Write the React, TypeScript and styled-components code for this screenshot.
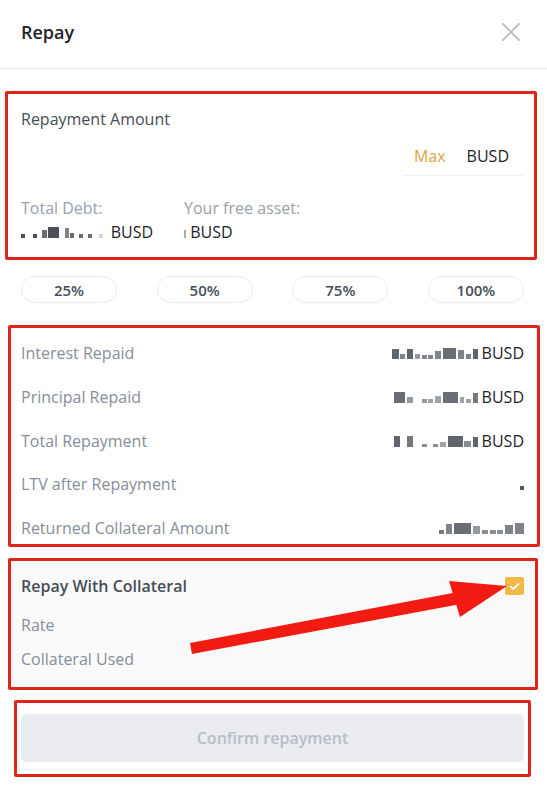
import React, { useState } from "react";
import styled, { createGlobalStyle } from "styled-components";

const GlobalStyle = createGlobalStyle`
  html, body {
    margin: 0;
    padding: 0;
    background: #ffffff;
  }
  body {
    font-family: "Open Sans", "Noto Sans", "Liberation Sans", sans-serif;
    color: #1e2329;
    -webkit-font-smoothing: antialiased;
  }
`;

const StyledModal = styled.div`
  position: relative;
  width: 547px;
  height: 786px;
  background: #ffffff;
  overflow: hidden;
`;

const StyledHeader = styled.div`
  height: 68px;
  padding: 0 24px 0 21px;
  display: flex;
  align-items: center;
  justify-content: space-between;
  border-bottom: 1px solid #eaecef;
`;

const StyledTitle = styled.div`
  font-size: 18px;
  font-weight: 600;
  color: #1e2329;
  margin-top: -4px;
`;

const StyledClose = styled.button`
  border: none;
  outline: none;
  background: transparent;
  padding: 0;
  width: 24px;
  height: 24px;
  display: flex;
  align-items: center;
  justify-content: center;
  margin-top: -4px;
  cursor: pointer;
`;

const StyledBody = styled.div`
  display: flex;
  flex-direction: column;
  padding-top: 22px;
`;

const StyledMark = styled.div<{ $left: number; $right: number; $bg?: string }>`
  margin: 0 ${(p) => p.$right}px 0 ${(p) => p.$left}px;
  border: 3px solid #e0241a;
  border-radius: 2px;
  background: ${(p) => p.$bg || "#ffffff"};
  padding: 0 ${(p) => 547 - 524 - p.$right - 3}px 0 ${(p) => 21 - p.$left - 3}px;
`;

const StyledGap = styled.div<{ $h: number }>`
  height: ${(p) => p.$h}px;
  flex-shrink: 0;
`;

const StyledLabel = styled.div`
  font-size: 16px;
  color: #474d57;
  line-height: 20px;
`;

const StyledAmountBlock = styled.div`
  display: flex;
  flex-direction: column;
  padding: 15px 0 15px;
`;

const StyledInputRow = styled.div`
  display: flex;
  justify-content: flex-end;
  margin-top: 8px;
`;

const StyledInputTail = styled.div`
  width: 121px;
  height: 39px;
  display: flex;
  align-items: center;
  justify-content: flex-end;
  gap: 21px;
  padding-right: 15px;
  box-sizing: border-box;
  border-bottom: 1px solid #eef0f2;
  font-size: 16px;
`;

const StyledMax = styled.span`
  color: #e2a243;
  font-weight: 500;
`;

const StyledUnit = styled.span`
  color: #1e2329;
`;

const StyledAssets = styled.div`
  display: grid;
  grid-template-columns: 163px auto;
  margin-top: 22px;
`;

const StyledAsset = styled.div`
  display: flex;
  flex-direction: column;
  gap: 4px;
  font-size: 16px;
  line-height: 20px;

  & > span:first-child {
    color: #9aa1ab;
  }
`;

const StyledAssetValue = styled.div`
  display: flex;
  align-items: center;
  gap: 8px;
  color: #1e2329;
`;

const StyledPercents = styled.div`
  display: grid;
  grid-template-columns: repeat(4, 96px);
  justify-content: space-between;
  padding: 16px 23px 22px 21px;
`;

const StyledPercent = styled.button`
  height: 27px;
  border: 1px solid #eaecef;
  border-radius: 14px;
  background: #ffffff;
  outline: none;
  font-family: inherit;
  font-size: 15px;
  font-weight: 600;
  color: #474d57;
  cursor: pointer;
  padding: 0;
`;

const StyledRows = styled.div`
  display: flex;
  flex-direction: column;
  gap: 23.75px;
  padding: 15px 0 6px;
`;

const StyledRow = styled.div`
  height: 20px;
  display: flex;
  align-items: center;
  justify-content: space-between;
  font-size: 16px;
`;

const StyledRowLabel = styled.span`
  color: #878e99;
`;

const StyledRowValue = styled.span`
  display: flex;
  align-items: center;
  gap: 4px;
  color: #1e2329;
`;

const StyledCollateral = styled.div`
  display: flex;
  flex-direction: column;
  padding: 14px 0 18px;
`;

const StyledCollateralHead = styled.div`
  display: flex;
  align-items: center;
  justify-content: space-between;
  height: 22px;
  font-size: 16px;
  font-weight: 600;
  color: #474d57;
`;

const StyledCheck = styled.button<{ $checked: boolean }>`
  width: 19px;
  height: 18px;
  border-radius: 2px;
  border: none;
  padding: 0;
  background: ${(p) => (p.$checked ? "#f3b945" : "#eaecef")};
  display: flex;
  align-items: center;
  justify-content: center;
  cursor: pointer;
`;

const StyledSubLabel = styled.div<{ $top: number }>`
  margin-top: ${(p) => p.$top}px;
  font-size: 16px;
  line-height: 20px;
  color: #878e99;
`;

const StyledConfirm = styled.button`
  width: 100%;
  height: 48px;
  margin: 11px 0 12px;
  border: none;
  outline: none;
  border-radius: 5px;
  background: #eaecef;
  color: #b7bdc6;
  font-family: inherit;
  font-size: 16px;
  font-weight: 600;
  cursor: not-allowed;
`;

const StyledBlocks = styled.span`
  display: inline-flex;
  align-items: flex-end;
  height: 12px;
`;

const StyledBlock = styled.i<{ $w: number; $h: number; $o: number }>`
  display: block;
  width: ${(p) => p.$w}px;
  height: ${(p) => p.$h}px;
  background: #2b3139;
  opacity: ${(p) => p.$o};
`;

const StyledArrow = styled.svg`
  position: absolute;
  left: 0;
  top: 0;
  pointer-events: none;
`;

// blurred, redacted amounts: [width, height, opacity]
type Blk = [number, number, number];

const Redacted: React.FC<{ blocks: Blk[]; k?: number }> = ({ blocks, k = 1 }) => (
  <StyledBlocks style={{ gap: k }}>
    {blocks.map(([w, h, o], i) => (
      <StyledBlock key={i} $w={w * k} $h={h} $o={o} />
    ))}
  </StyledBlocks>
);

const debt: Blk[] = [
  [3, 4, 0.85], [4, 0, 0], [3, 4, 0.85], [2, 0, 0], [4, 8, 0.7], [8, 11, 0.85],
  [3, 0, 0], [3, 10, 0.6], [3, 5, 0.7], [2, 0, 0], [3, 4, 0.7], [2, 0, 0],
  [3, 4, 0.7], [3, 0, 0], [3, 4, 0.2],
];
const interest: Blk[] = [
  [4, 10, 0.75], [3, 5, 0.6], [4, 10, 0.75], [3, 5, 0.5], [3, 4, 0.6],
  [3, 4, 0.6], [4, 8, 0.6], [8, 11, 0.7], [4, 9, 0.6], [3, 5, 0.6], [3, 10, 0.75],
];
const principal: Blk[] = [
  [7, 11, 0.7], [4, 6, 0.5], [3, 0, 0], [3, 4, 0.5], [3, 4, 0.45], [4, 7, 0.45],
  [9, 11, 0.7], [3, 6, 0.45], [3, 4, 0.45], [3, 10, 0.65],
];
const total: Blk[] = [
  [4, 11, 0.75], [2, 0, 0], [4, 11, 0.65], [3, 0, 0], [3, 3, 0.55], [2, 0, 0],
  [3, 3, 0.55], [4, 5, 0.45], [9, 11, 0.75], [4, 6, 0.55], [3, 10, 0.75],
];
const returned: Blk[] = [
  [3, 4, 0.65], [3, 10, 0.6], [9, 11, 0.7], [4, 8, 0.5], [3, 4, 0.55],
  [3, 4, 0.55], [3, 4, 0.55], [4, 9, 0.6], [5, 11, 0.6],
];

const CloseIcon: React.FC = () => (
  <svg width="18" height="18" viewBox="0 0 18 18" fill="none">
    <path
      d="M1 1L17 17M17 1L1 17"
      stroke="#b7bdc6"
      strokeWidth="1.8"
      strokeLinecap="round"
    />
  </svg>
);

const CheckIcon: React.FC = () => (
  <svg width="11" height="9" viewBox="0 0 11 9" fill="none">
    <path
      d="M1.5 4.5L4.3 7.2L9.5 1.8"
      stroke="#ffffff"
      strokeWidth="1.8"
      strokeLinecap="round"
      strokeLinejoin="round"
    />
  </svg>
);

const App: React.FC = () => {
  const [pct, setPct] = useState<number | null>(null);
  const [useCollateral, setUseCollateral] = useState(true);

  const rows: { label: string; value: React.ReactNode }[] = [
    {
      label: "Interest Repaid",
      value: (
        <>
          <Redacted blocks={interest} k={1.65} /> BUSD
        </>
      ),
    },
    {
      label: "Principal Repaid",
      value: (
        <>
          <Redacted blocks={principal} k={1.65} /> BUSD
        </>
      ),
    },
    {
      label: "Total Repayment",
      value: (
        <>
          <Redacted blocks={total} k={1.65} /> BUSD
        </>
      ),
    },
    { label: "LTV after Repayment", value: <Redacted blocks={[[4, 4, 0.8]]} /> },
    {
      label: "Returned Collateral Amount",
      value: <Redacted blocks={returned} k={1.9} />,
    },
  ];

  return (
    <StyledModal>
      <GlobalStyle />
      <StyledHeader>
        <StyledTitle>Repay</StyledTitle>
        <StyledClose type="button" aria-label="Close">
          <CloseIcon />
        </StyledClose>
      </StyledHeader>

      <StyledBody>
        <StyledMark $left={5} $right={10}>
          <StyledAmountBlock>
            <StyledLabel>Repayment Amount</StyledLabel>
            <StyledInputRow>
              <StyledInputTail>
                <StyledMax>Max</StyledMax>
                <StyledUnit>BUSD</StyledUnit>
              </StyledInputTail>
            </StyledInputRow>
            <StyledAssets>
              <StyledAsset>
                <span>Total Debt:</span>
                <StyledAssetValue>
                  <Redacted blocks={debt} k={1.3} />
                  BUSD
                </StyledAssetValue>
              </StyledAsset>
              <StyledAsset>
                <span>Your free asset:</span>
                <StyledAssetValue>
                  <span>
                    <Redacted blocks={[[2, 8, 0.4]]} /> BUSD
                  </span>
                </StyledAssetValue>
              </StyledAsset>
            </StyledAssets>
          </StyledAmountBlock>
        </StyledMark>

        <StyledPercents>
          {[25, 50, 75, 100].map((p) => (
            <StyledPercent key={p} type="button" onClick={() => setPct(p)}>
              {p}%
            </StyledPercent>
          ))}
        </StyledPercents>

        <StyledMark $left={8} $right={7}>
          <StyledRows>
            {rows.map((r) => (
              <StyledRow key={r.label}>
                <StyledRowLabel>{r.label}</StyledRowLabel>
                <StyledRowValue>{r.value}</StyledRowValue>
              </StyledRow>
            ))}
          </StyledRows>
        </StyledMark>

        <StyledGap $h={11} />

        <StyledMark $left={8} $right={9} $bg="#fafafa">
          <StyledCollateral>
            <StyledCollateralHead>
              <span>Repay With Collateral</span>
              <StyledCheck
                type="button"
                $checked={useCollateral}
                onClick={() => setUseCollateral((v) => !v)}
              >
                {useCollateral && <CheckIcon />}
              </StyledCheck>
            </StyledCollateralHead>
            <StyledSubLabel $top={18}>Rate</StyledSubLabel>
            <StyledSubLabel $top={14}>Collateral Used</StyledSubLabel>
          </StyledCollateral>
        </StyledMark>

        <StyledGap $h={10} />

        <StyledMark $left={14} $right={16}>
          <StyledConfirm type="button" disabled={pct === null}>
            Confirm repayment
          </StyledConfirm>
        </StyledMark>
      </StyledBody>

      <StyledArrow width="547" height="786" viewBox="0 0 547 786">
        <path d="M190 643L458 592L461 604L192 654Z" fill="#f21b12" />
        <path d="M449 581L507 586L460 617Z" fill="#f21b12" />
      </StyledArrow>
    </StyledModal>
  );
};

export default App;
